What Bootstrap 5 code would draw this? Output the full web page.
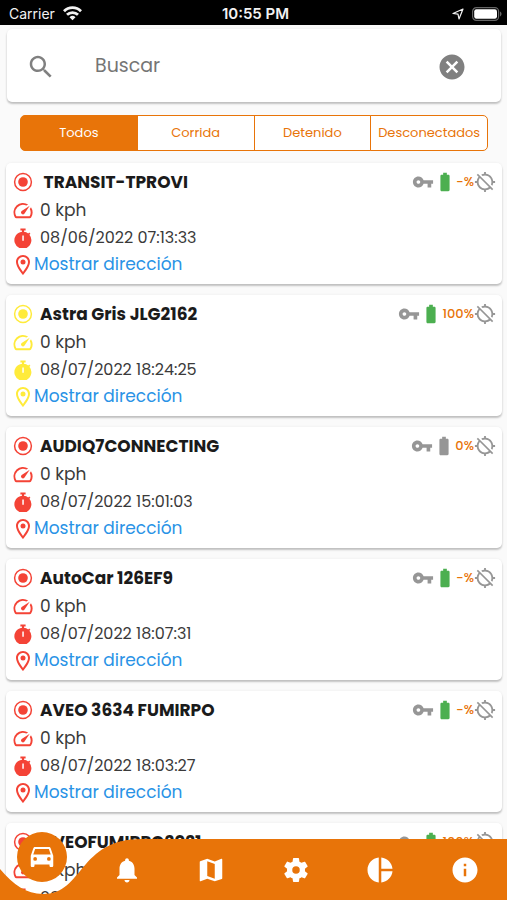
<!DOCTYPE html>
<html lang="es">
<head>
<meta charset="utf-8">
<meta name="viewport" content="width=device-width, initial-scale=1">
<title>Vehículos</title>
<link href="https://cdn.jsdelivr.net/npm/bootstrap@5.3.0/dist/css/bootstrap.min.css" rel="stylesheet">
<style>
  :root { --brand: #e87409; --icon-grey: #969696; }
  body { font-family: Poppins, Inter, "Open Sans", sans-serif; background: #fafafa; color: #1b1b1b; }
  svg { display: block; fill: currentColor; flex: none; }
  .i-20 { width: 20px; height: 20px; }
  .i-22 { width: 22px; height: 22px; }
  .i-30 { width: 30px; height: 30px; }

  .status-bar { background: #000; color: #f2f2f2; height: 25px; padding: 2px 5px 0 9px; font: 400 14px/24px Inter, sans-serif; }
  .status-bar .clock { font-size: 15px; font-weight: 600; }

  .scroller { overflow-y: auto; scrollbar-width: none; min-height: 0; }
  .scroller::-webkit-scrollbar { display: none; }

  .sheet { background: #fff; border-radius: 5px; box-shadow: 0 2px 2px rgba(0,0,0,.22), 0 0 3px rgba(0,0,0,.06); }
  .search-box { margin: 4px 6px 0 7px; height: 73px; padding: 2px 34px 0 19px; color: #808080; }
  .search-box input { margin-left: 39px; font-size: 19px; color: #555; background: none; outline: none; min-width: 0; }
  .search-box input::placeholder { color: #757575; opacity: 1; }
  .search-box .clear { color: #808080; }

  .filters { margin: 13px 19px 12px 20px; }
  .filters .btn { --bs-btn-color: var(--brand); --bs-btn-bg: #fff; --bs-btn-border-color: var(--brand);
    --bs-btn-hover-color: #fff; --bs-btn-hover-bg: var(--brand); --bs-btn-hover-border-color: var(--brand);
    --bs-btn-active-color: #fff; --bs-btn-active-bg: var(--brand); --bs-btn-active-border-color: var(--brand);
    --bs-btn-border-radius: 5px; flex: 1 1 0; height: 36px; padding: 0; font-size: 13px; line-height: 32px; }

  .fleet { padding: 0 5px 80px 6px; gap: 11px; }
  .unit { padding: 5px 6px 4px 7px; --state: #f44336; }
  .unit.idle { --state: #ffeb3b; }
  .unit .line { display: flex; align-items: center; font-size: 17px; color: #3a3a3a; height: 28px; }
  .unit .line > svg { color: var(--state); margin-right: 7px; }
  .unit .line.rate { height: 30px; }
  .unit .line.when { height: 23px; font-size: 16px; }
  .unit .line.where { height: 31px; }
  .unit .line.where > svg { margin-right: 1px; }
  .unit h2 { font-size: 17px; font-weight: 700; color: #1b1b1b; margin: 0; white-space: pre; }
  .unit a { color: #2a93e6; text-decoration: none; }
  .unit .gauges { color: var(--icon-grey); font-size: 13px; }
  .unit .gauges .level { color: var(--brand); font-weight: 500; }
  .unit .gauges .charged { color: #4caf50; }

  .tab-bar { height: 61px; color: #fff; }
  .tab-bar .notch { width: 150px; height: 61px; left: 0; top: 0; color: var(--brand); }
  .tab-bar .fill { left: 149px; right: 0; top: 0; bottom: 0; background: var(--brand); }
  .tab-bar a { flex: 1 1 0; color: #fff; height: 61px; position: relative; display: flex; align-items: center; justify-content: center; }
  .tab-bar .current { width: 50px; height: 50px; border-radius: 50%; background: var(--brand); display: flex; align-items: center; justify-content: center; margin-bottom: 25px; }
</style>
<script src="https://cdn.jsdelivr.net/npm/bootstrap@5.3.0/dist/js/bootstrap.bundle.min.js"></script>
</head>
<body>
<svg class="d-none" xmlns="http://www.w3.org/2000/svg">
  <symbol id="state" viewBox="0 0 20 20"><circle cx="10" cy="10" r="8.400" fill="none" stroke="currentColor" stroke-width="1.500"/><circle cx="10" cy="10" r="4.800"/></symbol>
  <symbol id="speed" viewBox="1.500 2 21 21"><path d="M20.380 8.570l-1.230 1.850a8 8 0 0 1-.22 7.580H5.070A8 8 0 0 1 15.580 6.850l1.850-1.230A10 10 0 0 0 3.350 19a2 2 0 0 0 1.720 1h13.850a2 2 0 0 0 1.740-1 10 10 0 0 0-.27-10.440zm-9.790 6.840a2 2 0 0 0 2.830 0l5.660-8.490-8.490 5.660a2 2 0 0 0 0 2.830z"/></symbol>
  <symbol id="timer" viewBox="0 0 20 20"><path fill-rule="evenodd" d="M7.400.6h5.200v1.800h-1.600v1.400c1.600.2 3 .8 4.200 1.700l1-1 1.200 1.200-1 1.100A8.500 8.500 0 1 1 9 3.800V2.400H7.400zM9.300 7.500v5.200h1.500V7.500z"/></symbol>
  <symbol id="pin" viewBox="2 2 20 20"><path d="M12 2C8.130 2 5 5.130 5 9c0 5.250 7 13 7 13s7-7.750 7-13c0-3.870-3.130-7-7-7zM7 9c0-2.760 2.240-5 5-5s5 2.240 5 5c0 2.880-2.880 7.190-5 9.880C9.920 16.210 7 11.850 7 9z"/><circle cx="12" cy="9" r="2.500"/></symbol>
  <symbol id="key" viewBox="0 0 24 24"><path d="M12.650 10C11.830 7.670 9.610 6 7 6c-3.310 0-6 2.690-6 6s2.690 6 6 6c2.610 0 4.830-1.670 5.650-4H17v4h4v-4h2v-4H12.650zM7 14c-1.100 0-2-.9-2-2s.9-2 2-2 2 .9 2 2-.9 2-2 2z"/></symbol>
  <symbol id="battery" viewBox="0 0 24 24"><path d="M15.670 4H14V2h-4v2H8.330C7.600 4 7 4.600 7 5.330v15.330C7 21.400 7.600 22 8.330 22h7.330c.74 0 1.340-.6 1.340-1.330V5.330C17 4.600 16.400 4 15.670 4z"/></symbol>
  <symbol id="gps-off" viewBox="0 0 24 24"><path d="M20.940 11c-.46-4.170-3.770-7.480-7.940-7.940V1h-2v2.060c-1.130.12-2.190.46-3.160.97l1.500 1.500C10.160 5.190 11.060 5 12 5c3.870 0 7 3.130 7 7 0 .94-.19 1.840-.52 2.650l1.500 1.500c.5-.96.84-2.020.97-3.150H23v-2h-2.060zM3 4.270l2.040 2.040C3.970 7.620 3.250 9.230 3.060 11H1v2h2.060c.46 4.170 3.770 7.480 7.940 7.940V23h2v-2.060c1.770-.2 3.380-.91 4.690-1.980L19.730 21 21 19.730 4.270 3 3 4.270zm13.270 13.270C15.090 18.450 13.610 19 12 19c-3.870 0-7-3.130-7-7 0-1.610.55-3.090 1.460-4.270l9.810 9.810z"/></symbol>
</svg>

<div class="vh-100 d-flex flex-column overflow-hidden">
  <header class="status-bar d-flex align-items-center">
    <div class="col d-flex align-items-center gap-2">Carrier
      <svg width="19" height="15" viewBox="0 0 19 15" aria-label="Wi-Fi"><g fill="none" stroke="currentColor" stroke-width="2.800"><path d="M1 5.200a12 12 0 0 1 17 0"/><path d="M4 8.800a7.800 7.800 0 0 1 11 0"/></g><path d="M9.500 14.300l-3-3.100a4.300 4.300 0 0 1 6 0z"/></svg>
    </div>
    <div class="clock">10:55 PM</div>
    <div class="col d-flex align-items-center justify-content-end gap-2">
      <svg width="12" height="12" viewBox="0 0 12 12" aria-label="Ubicación"><path fill="none" stroke="currentColor" stroke-width="1.200" stroke-linejoin="round" d="M11 1L7 11 6 6.200 1 5.500z"/></svg>
      <svg width="30" height="14" viewBox="0 0 30 14" aria-label="Batería"><rect x=".6" y=".6" width="26" height="12.800" rx="3.800" fill="none" stroke="#666" stroke-width="1.200"/><rect x="2.200" y="2.200" width="22.800" height="9.600" rx="2.200" fill="#fff"/><path d="M28 4.600c2 .8 2 4 0 4.800z" fill="#666"/></svg>
    </div>
  </header>

  <main class="scroller flex-grow-1">
    <form class="sheet search-box d-flex align-items-center" role="search">
      <svg class="i-30" viewBox="0 0 24 24"><path d="M15.500 14h-.79l-.28-.27C15.410 12.590 16 11.110 16 9.500 16 5.910 13.090 3 9.500 3S3 5.910 3 9.500 5.910 16 9.500 16c1.610 0 3.090-.59 4.230-1.570l.27.28v.79l5 4.990L20.490 19l-4.990-5zm-6 0C7.010 14 5 11.990 5 9.500S7.010 5 9.500 5 14 7.010 14 9.500 11.990 14 9.500 14z"/></svg>
      <input class="border-0 p-0 flex-grow-1" type="text" placeholder="Buscar" aria-label="Buscar">
      <button class="clear btn p-0 border-0" type="button" aria-label="Borrar"><svg class="i-30" viewBox="0 0 24 24"><path d="M12 2C6.470 2 2 6.470 2 12s4.470 10 10 10 10-4.470 10-10S17.530 2 12 2zm5 13.590L15.590 17 12 13.410 8.410 17 7 15.590 10.590 12 7 8.410 8.410 7 12 10.590 15.590 7 17 8.410 13.410 12 17 15.590z"/></svg></button>
    </form>

    <div class="filters btn-group d-flex" role="group" aria-label="Estado">
      <button type="button" class="btn active">Todos</button>
      <button type="button" class="btn">Corrida</button>
      <button type="button" class="btn">Detenido</button>
      <button type="button" class="btn">Desconectados</button>
    </div>

    <div class="fleet d-flex flex-column">
      <article class="unit sheet">
        <div class="line"><svg class="i-20"><use href="#state"/></svg><h2> TRANSIT-TPROVI</h2>
          <div class="gauges d-flex align-items-center ms-auto"><svg class="i-22"><use href="#key"/></svg><svg class="i-22 charged"><use href="#battery"/></svg><span class="level">-%</span><svg class="i-22"><use href="#gps-off"/></svg></div></div>
        <div class="line rate"><svg class="i-20"><use href="#speed"/></svg>0 kph</div>
        <div class="line when"><svg class="i-20"><use href="#timer"/></svg>08/06/2022 07:13:33</div>
        <div class="line where"><svg class="i-20"><use href="#pin"/></svg><a href="#">Mostrar dirección</a></div>
      </article>
      <article class="unit sheet idle">
        <div class="line"><svg class="i-20"><use href="#state"/></svg><h2>Astra Gris JLG2162</h2>
          <div class="gauges d-flex align-items-center ms-auto"><svg class="i-22"><use href="#key"/></svg><svg class="i-22 charged"><use href="#battery"/></svg><span class="level">100%</span><svg class="i-22"><use href="#gps-off"/></svg></div></div>
        <div class="line rate"><svg class="i-20"><use href="#speed"/></svg>0 kph</div>
        <div class="line when"><svg class="i-20"><use href="#timer"/></svg>08/07/2022 18:24:25</div>
        <div class="line where"><svg class="i-20"><use href="#pin"/></svg><a href="#">Mostrar dirección</a></div>
      </article>
      <article class="unit sheet">
        <div class="line"><svg class="i-20"><use href="#state"/></svg><h2>AUDIQ7CONNECTING</h2>
          <div class="gauges d-flex align-items-center ms-auto"><svg class="i-22"><use href="#key"/></svg><svg class="i-22"><use href="#battery"/></svg><span class="level">0%</span><svg class="i-22"><use href="#gps-off"/></svg></div></div>
        <div class="line rate"><svg class="i-20"><use href="#speed"/></svg>0 kph</div>
        <div class="line when"><svg class="i-20"><use href="#timer"/></svg>08/07/2022 15:01:03</div>
        <div class="line where"><svg class="i-20"><use href="#pin"/></svg><a href="#">Mostrar dirección</a></div>
      </article>
      <article class="unit sheet">
        <div class="line"><svg class="i-20"><use href="#state"/></svg><h2>AutoCar 126EF9</h2>
          <div class="gauges d-flex align-items-center ms-auto"><svg class="i-22"><use href="#key"/></svg><svg class="i-22 charged"><use href="#battery"/></svg><span class="level">-%</span><svg class="i-22"><use href="#gps-off"/></svg></div></div>
        <div class="line rate"><svg class="i-20"><use href="#speed"/></svg>0 kph</div>
        <div class="line when"><svg class="i-20"><use href="#timer"/></svg>08/07/2022 18:07:31</div>
        <div class="line where"><svg class="i-20"><use href="#pin"/></svg><a href="#">Mostrar dirección</a></div>
      </article>
      <article class="unit sheet">
        <div class="line"><svg class="i-20"><use href="#state"/></svg><h2>AVEO 3634 FUMIRPO</h2>
          <div class="gauges d-flex align-items-center ms-auto"><svg class="i-22"><use href="#key"/></svg><svg class="i-22 charged"><use href="#battery"/></svg><span class="level">-%</span><svg class="i-22"><use href="#gps-off"/></svg></div></div>
        <div class="line rate"><svg class="i-20"><use href="#speed"/></svg>0 kph</div>
        <div class="line when"><svg class="i-20"><use href="#timer"/></svg>08/07/2022 18:03:27</div>
        <div class="line where"><svg class="i-20"><use href="#pin"/></svg><a href="#">Mostrar dirección</a></div>
      </article>
      <article class="unit sheet">
        <div class="line"><svg class="i-20"><use href="#state"/></svg><h2>AVEOFUMIRPO2021</h2>
          <div class="gauges d-flex align-items-center ms-auto"><svg class="i-22"><use href="#key"/></svg><svg class="i-22 charged"><use href="#battery"/></svg><span class="level">100%</span><svg class="i-22"><use href="#gps-off"/></svg></div></div>
        <div class="line rate"><svg class="i-20"><use href="#speed"/></svg>0 kph</div>
        <div class="line when"><svg class="i-20"><use href="#timer"/></svg>08/07/2022 18:03:27</div>
        <div class="line where"><svg class="i-20"><use href="#pin"/></svg><a href="#">Mostrar dirección</a></div>
      </article>
    </div>
  </main>

  <nav class="tab-bar fixed-bottom d-flex" aria-label="Principal">
    <svg class="notch position-absolute" viewBox="0 0 150 61"><path d="M0 30C14 46 26 55 43 55C84 55 78 0 142 0H150V61H0z"/></svg>
    <div class="fill position-absolute"></div>
    <a href="#" aria-label="Vehículos" aria-current="page"><span class="current"><svg class="i-30" viewBox="0 0 24 24"><path fill-rule="evenodd" d="M18.920 5.010C18.720 4.420 18.160 4 17.500 4h-11c-.66 0-1.210.42-1.420 1.010L3 11v8c0 .55.45 1 1 1h1c.55 0 1-.45 1-1v-1h12v1c0 .55.45 1 1 1h1c.55 0 1-.45 1-1v-8zM6.500 15a1.500 1.500 0 1 1 0-3 1.500 1.500 0 0 1 0 3zm11 0a1.500 1.500 0 1 1 0-3 1.500 1.500 0 0 1 0 3zM5 10l1.500-4.500h11L19 10z"/></svg></span></a>
    <a href="#" aria-label="Alertas"><svg class="i-30" viewBox="0 0 24 24"><path d="M12 22c1.100 0 2-.9 2-2h-4c0 1.100.89 2 2 2zm6-6v-5c0-3.070-1.640-5.640-4.500-6.320V4c0-.83-.67-1.500-1.500-1.500s-1.500.67-1.500 1.500v.68C7.630 5.360 6 7.920 6 11v5l-2 2v1h16v-1l-2-2z"/></svg></a>
    <a href="#" aria-label="Mapa"><svg class="i-30" viewBox="0 0 24 24"><path d="M20.500 3l-.16.03L15 5.100 9 3 3.360 4.900c-.21.07-.36.25-.36.48V20.500c0 .28.22.5.5.5l.16-.03L9 18.900l6 2.100 5.640-1.900c.21-.07.36-.25.36-.48V3.500c0-.28-.22-.5-.5-.5zM15 19l-6-2.110V5l6 2.110V19z"/></svg></a>
    <a href="#" aria-label="Ajustes"><svg class="i-30" viewBox="0 0 24 24"><path fill-rule="evenodd" d="M19.140 12.940c.04-.3.06-.61.06-.94 0-.32-.02-.64-.07-.94l2.030-1.580c.18-.14.23-.41.12-.61l-1.920-3.320c-.12-.22-.37-.29-.59-.22l-2.390.96c-.5-.38-1.030-.7-1.620-.94l-.36-2.540c-.04-.24-.24-.41-.48-.41h-3.840c-.24 0-.43.17-.47.41l-.36 2.540c-.59.24-1.130.57-1.620.94l-2.390-.96c-.22-.08-.47 0-.59.22L2.740 8.870c-.12.21-.08.47.12.61l2.030 1.580c-.05.3-.09.63-.09.94s.02.64.07.94l-2.030 1.580c-.18.14-.23.41-.12.61l1.920 3.320c.12.22.37.29.59.22l2.390-.96c.5.38 1.030.7 1.620.94l.36 2.540c.05.24.24.41.48.41h3.840c.24 0 .44-.17.47-.41l.36-2.540c.59-.24 1.130-.56 1.620-.94l2.390.96c.22.08.47 0 .59-.22l1.920-3.320c.12-.22.07-.47-.12-.61zM12 15a3 3 0 1 1 0-6 3 3 0 0 1 0 6z"/></svg></a>
    <a href="#" aria-label="Informes"><svg class="i-30" viewBox="0 0 24 24"><path d="M11 2v20c-5.070-.5-9-4.790-9-10s3.930-9.500 9-10zm2.030 0v8.990H22c-.47-4.740-4.240-8.520-8.970-8.990zm0 11.010V22c4.740-.47 8.500-4.250 8.970-8.990h-8.970z"/></svg></a>
    <a href="#" aria-label="Información"><svg class="i-30" viewBox="0 0 24 24"><path d="M12 2C6.480 2 2 6.480 2 12s4.480 10 10 10 10-4.480 10-10S17.520 2 12 2zm1 15h-2v-6h2v6zm0-8h-2V7h2v2z"/></svg></a>
  </nav>
</div>
</body>
</html>
